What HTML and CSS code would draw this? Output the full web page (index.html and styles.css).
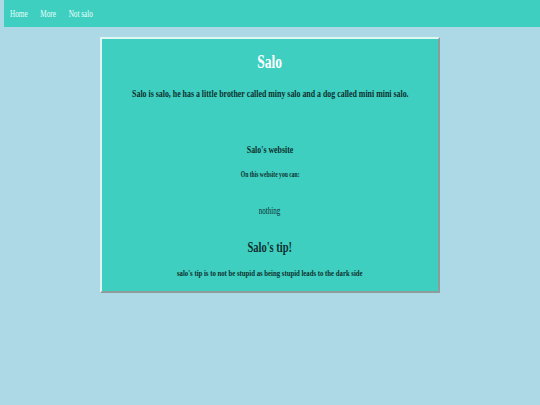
FILE: index.html
```html
<!DOCTYPE html>
<html>
<head>
<meta charset="utf-8">
<link rel="stylesheet" href="styles.css">
</head>
<body>
<nav class="nav">
  <div class="nav-links">
    <a class="nav-link" href="#">Home</a>
    <a class="nav-link" href="#">More</a>
    <a class="nav-link" href="#">Not salo</a>
  </div>
</nav>
<main class="card">
  <h1 class="txt title">Salo</h1>
  <p class="txt intro">Salo is salo, he has a little brother called miny salo and a dog called mini mini salo.</p>
  <h2 class="txt sub">Salo's website</h2>
  <h4 class="txt small">On this website you can:</h4>
  <p class="txt nothing">nothing</p>
  <h2 class="txt tip">Salo's tip!</h2>
  <p class="txt tip-text">salo's tip is to not be stupid as being stupid leads to the dark side</p>
</main>
</body>
</html>
```
FILE: styles.css
```css
html, body {
  margin: 0;
  padding: 0;
}
body {
  background: #add8e6;
  font-family: "Liberation Serif", serif;
  color: #0f2f2e;
}
.nav {
  margin-left: 4px;
  height: 27px;
  background: #3ecfc1;
  display: flex;
  align-items: center;
  padding-left: 6px;
}
.nav-links {
  display: flex;
  gap: 17px;
  transform: scaleX(0.75);
  transform-origin: left center;
}
.nav-link {
  color: #eafffa;
  text-decoration: none;
  font-size: 9.6px;
  line-height: 1.2;
}
.card {
  box-sizing: border-box;
  width: 340px;
  height: 256px;
  margin: 10px auto 0;
  padding-top: 13px;
  background: #3ecfc1;
  border: 2px solid;
  border-color: #dff6f3 #8c9d9c #8c9d9c #dff6f3;
  text-align: center;
  display: flex;
  flex-direction: column;
  align-items: center;
}
.txt {
  flex: none;
  line-height: 1.2;
  transform: scaleX(0.75);
  white-space: nowrap;
}
.title {
  color: #ffffff;
  font-size: 18px;
  margin: 0;
}
.intro {
  font-weight: bold;
  font-size: 10.5px;
  margin: 14px 0 0;
}
.sub {
  font-size: 10.5px;
  margin: 43.5px 0 0;
}
.small {
  font-size: 7.5px;
  margin: 14px 0 0;
}
.nothing {
  font-size: 9.5px;
  margin: 27px 0 0;
}
.tip {
  font-size: 14px;
  margin: 22px 0 0;
}
.tip-text {
  font-weight: bold;
  font-size: 9px;
  margin: 12px 0 0;
}
```
